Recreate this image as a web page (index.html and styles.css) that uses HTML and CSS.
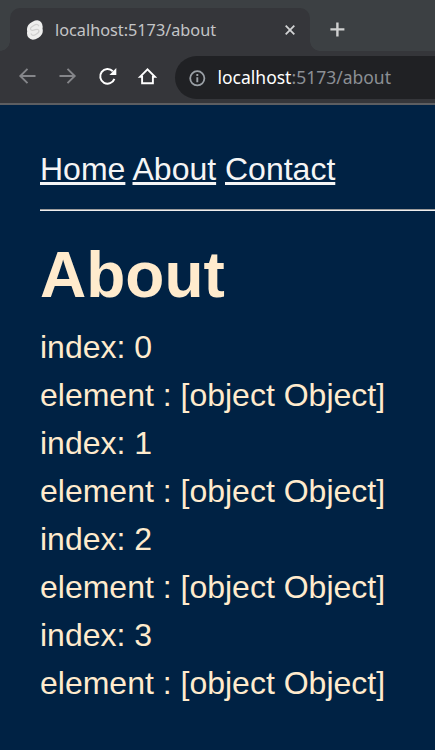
FILE: index.html
```html
<!DOCTYPE html>
<html lang="en">
<head>
<meta charset="utf-8">
<title>About</title>
<link rel="stylesheet" href="styles.css">
</head>
<body>
<header class="browser">
  <div class="tabs">
    <div class="tab">
      <svg class="favicon" width="18" height="20" viewBox="0 0 18 20"><path d="M6.5 1.8 Q12-1.2 15 2 Q17.3 5 16.5 8.4 Q18 14.4 12.5 17.7 Q6 21.7 2.5 17.6 Q.4 14.8 1.2 11.4 Q-.2 5.3 6.5 1.8Z" fill="#eeeeed"/><path d="M13 6.2 Q11.4 3.4 8.2 5.2 L5.9 6.7 Q3.4 8.5 5.2 10 Q6.3 10.8 9.3 9.6 Q12.7 8.6 13 11 Q13.2 12.5 9.7 14.5 Q6.4 16.7 4.9 13.6" fill="none" stroke="#d0d0cf" stroke-width="1.2"/></svg>
      <span class="tab-title">localhost:5173/about</span>
      <svg class="close" width="12" height="12" viewBox="0 0 12 12"><path d="M1.7 1.7l8.6 8.6M10.3 1.7l-8.6 8.6" stroke="#d2d3d4" stroke-width="1.8"/></svg>
    </div>
    <svg class="new-tab" width="16" height="16" viewBox="0 0 16 16"><path d="M8.4 1.4v14M1.4 8.4h14" stroke="#d0d1d1" stroke-width="2.4"/></svg>
  </div>
  <div class="toolbar">
    <svg class="nav-icon" width="20" height="20" viewBox="0 0 20 20"><path d="M18.5 10H3.5M10.5 2.8L3.3 10l7.2 7.2" fill="none" stroke="#85868a" stroke-width="1.9"/></svg>
    <svg class="nav-icon" width="20" height="20" viewBox="0 0 20 20"><path d="M2.5 10H17.5M10.5 2.8l7.2 7.2-7.2 7.2" fill="none" stroke="#85868a" stroke-width="1.9"/></svg>
    <svg class="nav-icon" width="20" height="20" viewBox="0 0 20 20"><path d="M17.4 12.8A7.3 7.3 0 1 1 15.8 5.3" fill="none" stroke="#fff" stroke-width="2"/><path d="M19.3 2v6.9h-6.9z" fill="#fff"/></svg>
    <svg class="nav-icon" width="20" height="20" viewBox="0 0 20 20"><path d="M3 10.8L10.5 3.3l7.5 7.5h-2.1v6.4h-10.8v-6.4z" fill="none" stroke="#fff" stroke-width="1.9"/></svg>
    <div class="address">
      <svg width="18" height="18" viewBox="0 0 18 18"><circle cx="9.3" cy="9.3" r="7.1" fill="none" stroke="#9aa0a6" stroke-width="1.8"/><path d="M9.3 5.1v1.9M9.3 8.3v5" stroke="#9aa0a6" stroke-width="1.9"/></svg>
      <span class="url"><span class="host">localhost</span>:5173/about</span>
    </div>
  </div>
</header>
<main>
  <nav><a href="#">Home</a> <a href="#">About</a> <a href="#">Contact</a></nav>
  <hr>
  <h1>About</h1>
  <div>index: 0</div>
  <div>element : [object Object]</div>
  <div>index: 1</div>
  <div>element : [object Object]</div>
  <div>index: 2</div>
  <div>element : [object Object]</div>
  <div>index: 3</div>
  <div>element : [object Object]</div>
</main>
</body>
</html>
```
FILE: styles.css
```css
* { box-sizing: border-box; }
html, body { height: 100%; }
body {
  margin: 0;
  overflow: hidden;
  background: #002244;
  color: blanchedalmond;
  font: 32px/48px "Liberation Sans", Arial, sans-serif;
}
svg { display: block; flex: none; }
.browser {
  height: 105px;
  background: #35363a;
  border-bottom: 2px solid #5d5e61;
  font-family: "Noto Sans", sans-serif;
}
.tabs {
  display: flex;
  height: 51px;
  padding: 8px 0 0 10px;
  background: #3c4043;
}
.tab {
  position: relative;
  display: flex;
  align-items: center;
  width: 300px;
  height: 43px;
  padding: 0 14px 0 16px;
  background: #35363a;
  border-radius: 10px 10px 0 0;
}
.tab::before, .tab::after {
  content: "";
  position: absolute;
  bottom: 0;
  width: 10px;
  height: 10px;
}
.tab::before {
  left: -10px;
  background: radial-gradient(circle at 0 0, transparent 9.5px, #35363a 10px);
}
.tab::after {
  right: -10px;
  background: radial-gradient(circle at 100% 0, transparent 9.5px, #35363a 10px);
}
.tab-title {
  margin-left: 11px;
  color: #c4c5c7;
  font-size: 16.25px;
  line-height: 22px;
}
.close { margin-left: auto; }
.new-tab { margin: 13px 0 0 19px; }
.toolbar {
  display: flex;
  height: 52px;
  padding: 5px 0 4px 17px;
}
.nav-icon { margin: 10px 20px 0 0; }
.nav-icon:nth-child(4) { margin-right: 18px; }
.address {
  display: flex;
  flex: 1;
  align-items: center;
  height: 43px;
  padding-left: 13px;
  background: #202124;
  border-radius: 22px 0 0 22px;
}
.url {
  margin-left: 11.5px;
  padding-bottom: 2px;
  color: #8b8f94;
  font-size: 17.5px;
  line-height: 24px;
  white-space: nowrap;
}
.host { color: #fff; }
main { padding: 40px 0 0 40px; }
a {
  color: whitesmoke;
  text-decoration-thickness: 3px;
}
hr {
  height: 2px;
  margin: 16px 0;
  border: 0;
  border-top: 1px solid #9a9a9a;
  background: #eee;
}
h1 {
  margin: 0;
  font-size: 64px;
  line-height: 96px;
}
```
